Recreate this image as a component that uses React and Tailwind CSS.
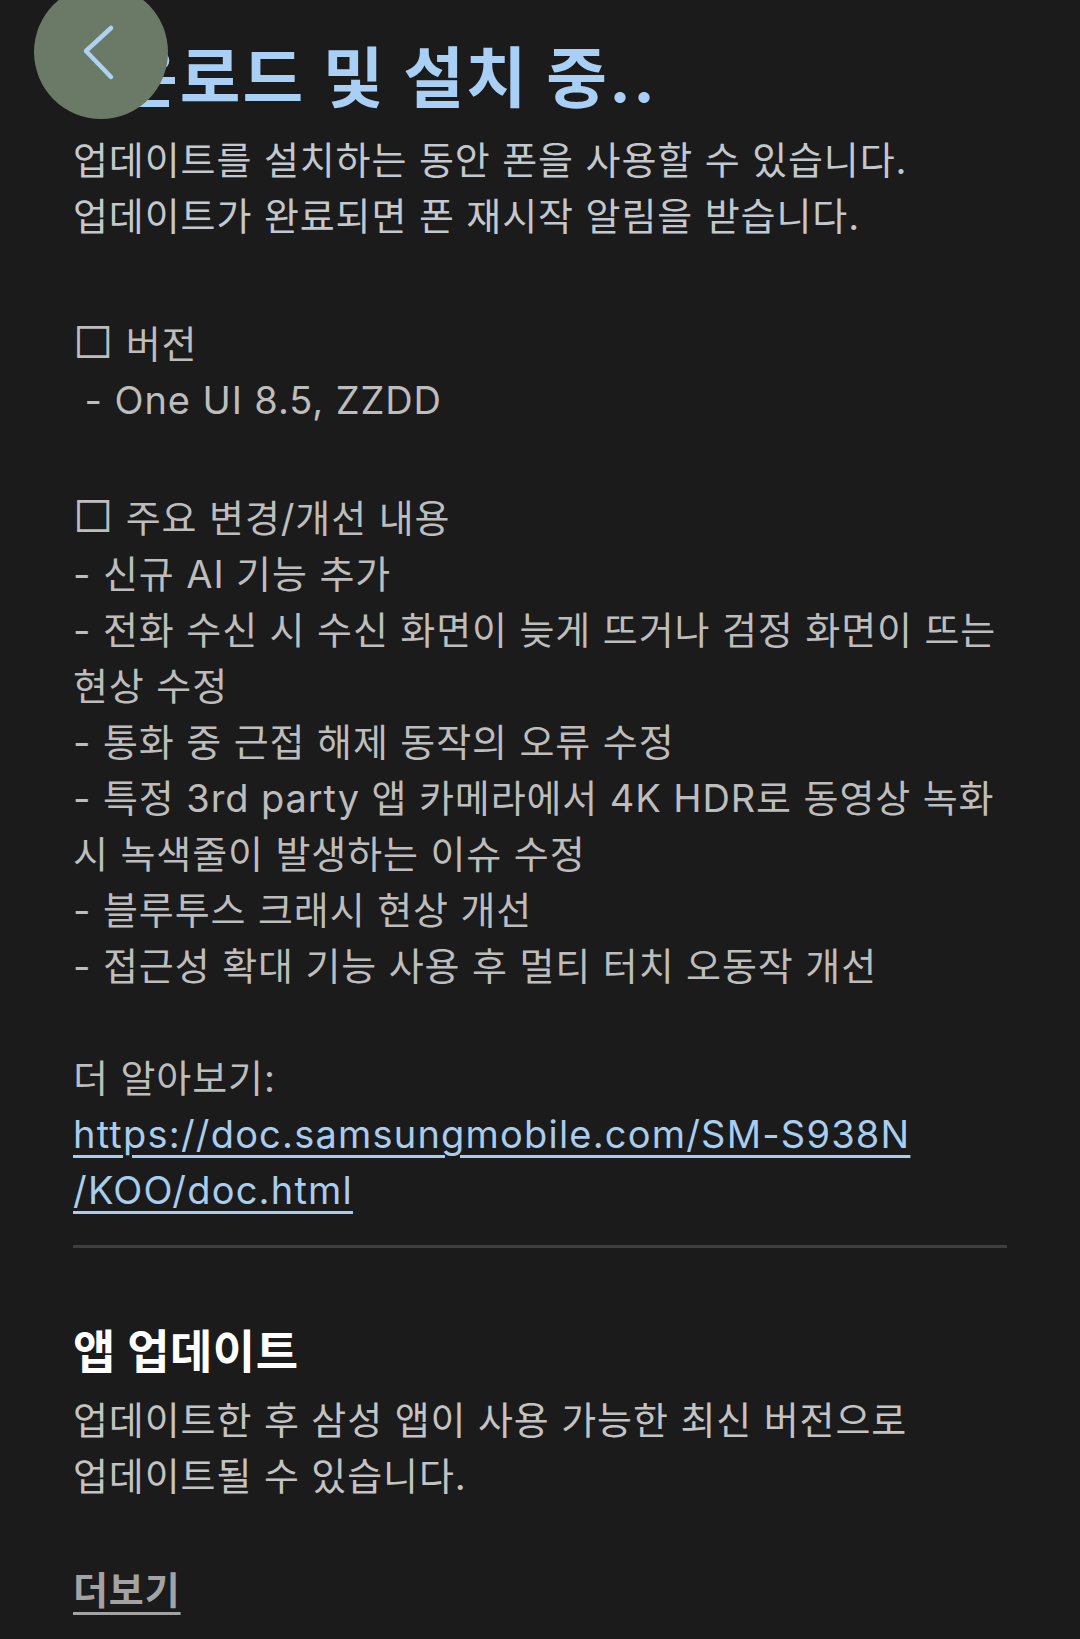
import React from "react";

const FONT = { fontFamily: "Inter, 'Noto Sans CJK KR', 'Noto Sans', sans-serif" };

function Box() {
  return <span className="text-[44px] leading-[0] font-light">□</span>;
}

export default function App() {
  const changes = [
    "- 신규 AI 기능 추가",
    "- 전화 수신 시 수신 화면이 늦게 뜨거나 검정 화면이 뜨는 현상 수정",
    "- 통화 중 근접 해제 동작의 오류 수정",
    "- 특정 3rd party 앱 카메라에서 4K HDR로 동영상 녹화 시 녹색줄이 발생하는 이슈 수정",
    "- 블루투스 크래시 현상 개선",
    "- 접근성 확대 기능 사용 후 멀티 터치 오동작 개선",
  ];
  return (
    <div className="min-h-[1639px] w-[1080px] bg-[#1b1b1b] overflow-hidden break-keep" style={FONT}>
      <div className="relative px-[73px] pt-[40px]">
        <div className="absolute left-[34px] top-[-15px] w-[134px] h-[134px] rounded-full bg-[#6b7a67] flex items-center justify-center z-10">
          <svg width="134" height="134" viewBox="0 0 134 134" fill="none">
            <polyline points="77,43 52,66 77,92" stroke="#acd3f2" strokeWidth="4.5" strokeLinecap="round" strokeLinejoin="round" />
          </svg>
        </div>
        <h1 className="ml-[44px] text-[66px] leading-[76px] font-bold text-[#a9cff4] tracking-[2px] whitespace-nowrap">
          운로드 및 설치 중..
        </h1>
        <p className="mt-[16px] text-[38px] leading-[56px] text-[#c3c8cf] tracking-[0.9px]">
          업데이트를 설치하는 동안 폰을 사용할 수 있습니다.
          <br />
          업데이트가 완료되면 폰 재시작 알림을 받습니다.
        </p>
      </div>

      <div className="px-[73px] text-[38px] leading-[56px] text-[#bdbdbd] tracking-[0.9px]">
        <div className="mt-[72px]">
          <p>
            <Box /> 버전
          </p>
          <p className="whitespace-pre"> - One UI 8.5, ZZDD</p>
        </div>
        <div className="mt-[62px]">
          <p>
            <Box /> 주요 변경/개선 내용
          </p>
          {changes.map((t, i) => (
            <p key={i}>{t}</p>
          ))}
          <p className="h-[56px]"></p>
          <p>더 알아보기:</p>
          <p className="text-[#a8cdee] underline underline-offset-[7px] decoration-[3px] tracking-[1.2px]">
            https://doc.samsungmobile.com/SM-S938N
            <br />
            /KOO/doc.html
          </p>
        </div>
        <div className="mt-[27px] h-[3px] bg-[#3f3f3f]"></div>

        <h2 className="mt-[75px] text-[46px] leading-[56px] font-bold text-white tracking-[0.5px]">앱 업데이트</h2>
        <p className="mt-[13px] text-[#c3c3c3]">
          업데이트한 후 삼성 앱이 사용 가능한 최신 버전으로
          <br />
          업데이트될 수 있습니다.
        </p>
        <p className="mt-[58px] font-bold text-[#a3a3a3] underline underline-offset-[8px] decoration-[3px]">더보기</p>
      </div>
    </div>
  );
}
